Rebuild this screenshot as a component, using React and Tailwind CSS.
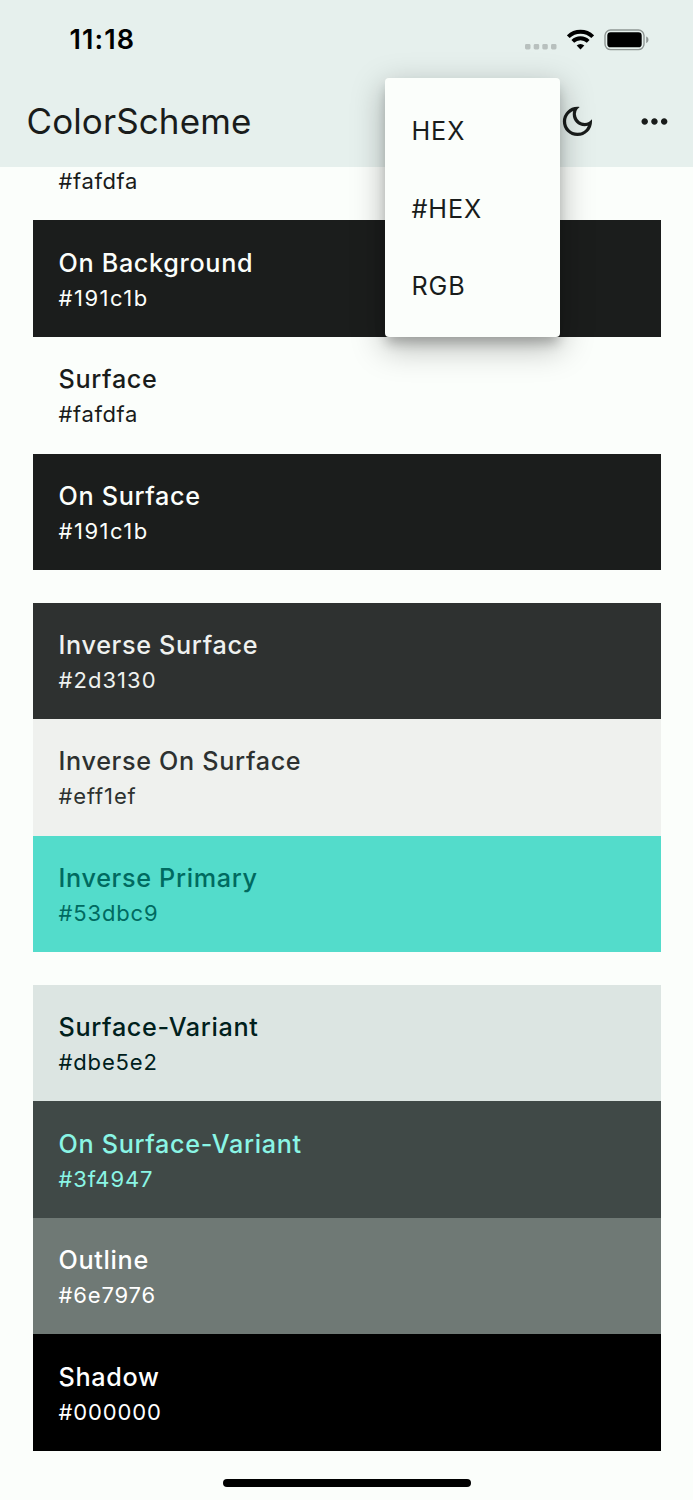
import React from "react";
import { MdMoreHoriz, MdOutlineDarkMode } from "react-icons/md";

const groups = [
  [
    { name: "On Background", hex: "#191c1b", color: "bg-[#1b1d1c] text-[#fbfefb]", spacing: "tracking-[1.5px]" },
    { name: "Surface", hex: "#fafdfa", color: "bg-[#fbfefb] text-[#191c1b]", spacing: "tracking-[0.6px]" },
    { name: "On Surface", hex: "#191c1b", color: "bg-[#1b1d1c] text-[#fbfefb]", spacing: "tracking-[1.5px]" },
  ],
  [
    { name: "Inverse Surface", hex: "#2d3130", color: "bg-[#2e3130] text-[#eff1ef]", spacing: "tracking-[1.05px]" },
    { name: "Inverse On Surface", hex: "#eff1ef", color: "bg-[#eff1ee] text-[#2d3130]" },
    { name: "Inverse Primary", hex: "#53dbc9", color: "bg-[#53dccb] text-[#006a60]" },
  ],
  [
    { name: "Surface-Variant", hex: "#dbe5e2", color: "bg-[#dce5e2] text-[#00201c]" },
    { name: "On Surface-Variant", hex: "#3f4947", color: "bg-[#404947] text-[#8af5e5]" },
    { name: "Outline", hex: "#6e7976", color: "bg-[#6f7975] text-white" },
    { name: "Shadow", hex: "#000000", color: "bg-black text-white" },
  ],
];

const formats = ["HEX", "#HEX", "RGB"];

const StatusBar = () => (
  <div className="flex h-[79px] items-center justify-between pr-[43px] pl-[69.5px] text-black">
    <span className="text-[27px] font-semibold leading-none tracking-[1.1px]">11:18</span>
    <div className="flex items-center">
      <svg width="32" height="6" viewBox="0 0 32 6" className="mt-[14px] mr-[10px]" fill="#b8c0be">
        <rect x="0" width="5.5" height="5.5" rx="1.4" />
        <rect x="8.7" width="5.5" height="5.5" rx="1.4" />
        <rect x="17.3" width="5.5" height="5.5" rx="1.4" />
        <rect x="26" width="5.5" height="5.5" rx="1.4" />
      </svg>
      <svg width="27" height="21" viewBox="0 0 27 21" className="mr-[10px]">
        <g fill="none" stroke="#000" strokeWidth="3.9">
          <path d="M1.3 7.7a17.4 17.4 0 0 1 24.4 0" />
          <path d="M5.8 12.4a11 11 0 0 1 15.4 0" />
        </g>
        <path d="M13.5 20.4 9.7 16.6a5.3 5.3 0 0 1 7.6 0z" />
      </svg>
      <svg width="46" height="22" viewBox="0 0 46 22">
        <rect x="1" y="1" width="39" height="19.6" rx="5.6" fill="none" stroke="#8f9694" strokeWidth="1.4" />
        <rect x="3.3" y="3.3" width="34.4" height="15" rx="3.4" />
        <path d="M42.2 7.6c3 1.2 3 5.4 0 6.6z" fill="#8f9694" />
      </svg>
    </div>
  </div>
);

const Swatch = ({ name, hex, color, spacing = "tracking-[0.85px]" }) => (
  <div className={`flex h-[116.58px] flex-col px-[26px] pt-[25.3px] ${color}`}>
    <p className="text-[25.2px] font-medium leading-[34px] tracking-[0.67px]">{name}</p>
    <p className={`mt-[2px] text-[22px] leading-[32px] ${spacing}`}>{hex}</p>
  </div>
);

const FormatMenu = () => (
  <div className="absolute top-[78px] left-[385px] z-20 flex h-[259px] w-[175px] flex-col rounded-[4px] bg-[#fbfefb] py-[15px] shadow-[0_8px_12px_-2px_rgba(0,0,0,0.22),0_10px_32px_2px_rgba(0,0,0,0.26)]">
    {formats.map((format) => (
      <button
        key={format}
        className="flex h-[77.7px] shrink-0 items-center pl-[26.5px] text-left text-[25.2px] tracking-[0.9px] text-[#191c1b]"
      >
        {format}
      </button>
    ))}
  </div>
);

const App = () => {
  return (
    <div className="relative h-[1500px] w-[693px] overflow-hidden bg-[#fbfefb] font-['Inter',sans-serif]">
      <header className="h-[167px] bg-[#e6f0ed]">
        <StatusBar />
        <div className="flex h-[85px] items-center justify-between pr-[19.2px] pl-[26.5px] text-[#191c1b]">
          <h1 className="text-[35px] leading-none tracking-[0.1px]">ColorScheme</h1>
          <div className="flex items-center gap-[38.5px]">
            <MdOutlineDarkMode size={38.9} />
            <MdMoreHoriz size={38.9} />
          </div>
        </div>
      </header>

      <main className="px-[32.5px]">
        {/* tail of the row scrolled under the app bar */}
        <p className="h-[53.4px] px-[26px] text-[22px] leading-[28.5px] tracking-[0.6px] text-[#191c1b]">
          #fafdfa
        </p>
        <div className="flex flex-col gap-[32.4px]">
          {groups.map((swatches, i) => (
            <section key={i}>
              {swatches.map((swatch) => (
                <Swatch key={swatch.name} {...swatch} />
              ))}
            </section>
          ))}
        </div>
      </main>

      <FormatMenu />
      <div className="mx-auto mt-[27.6px] h-2 w-[248px] rounded-full bg-black" />
    </div>
  );
};

export default App;
